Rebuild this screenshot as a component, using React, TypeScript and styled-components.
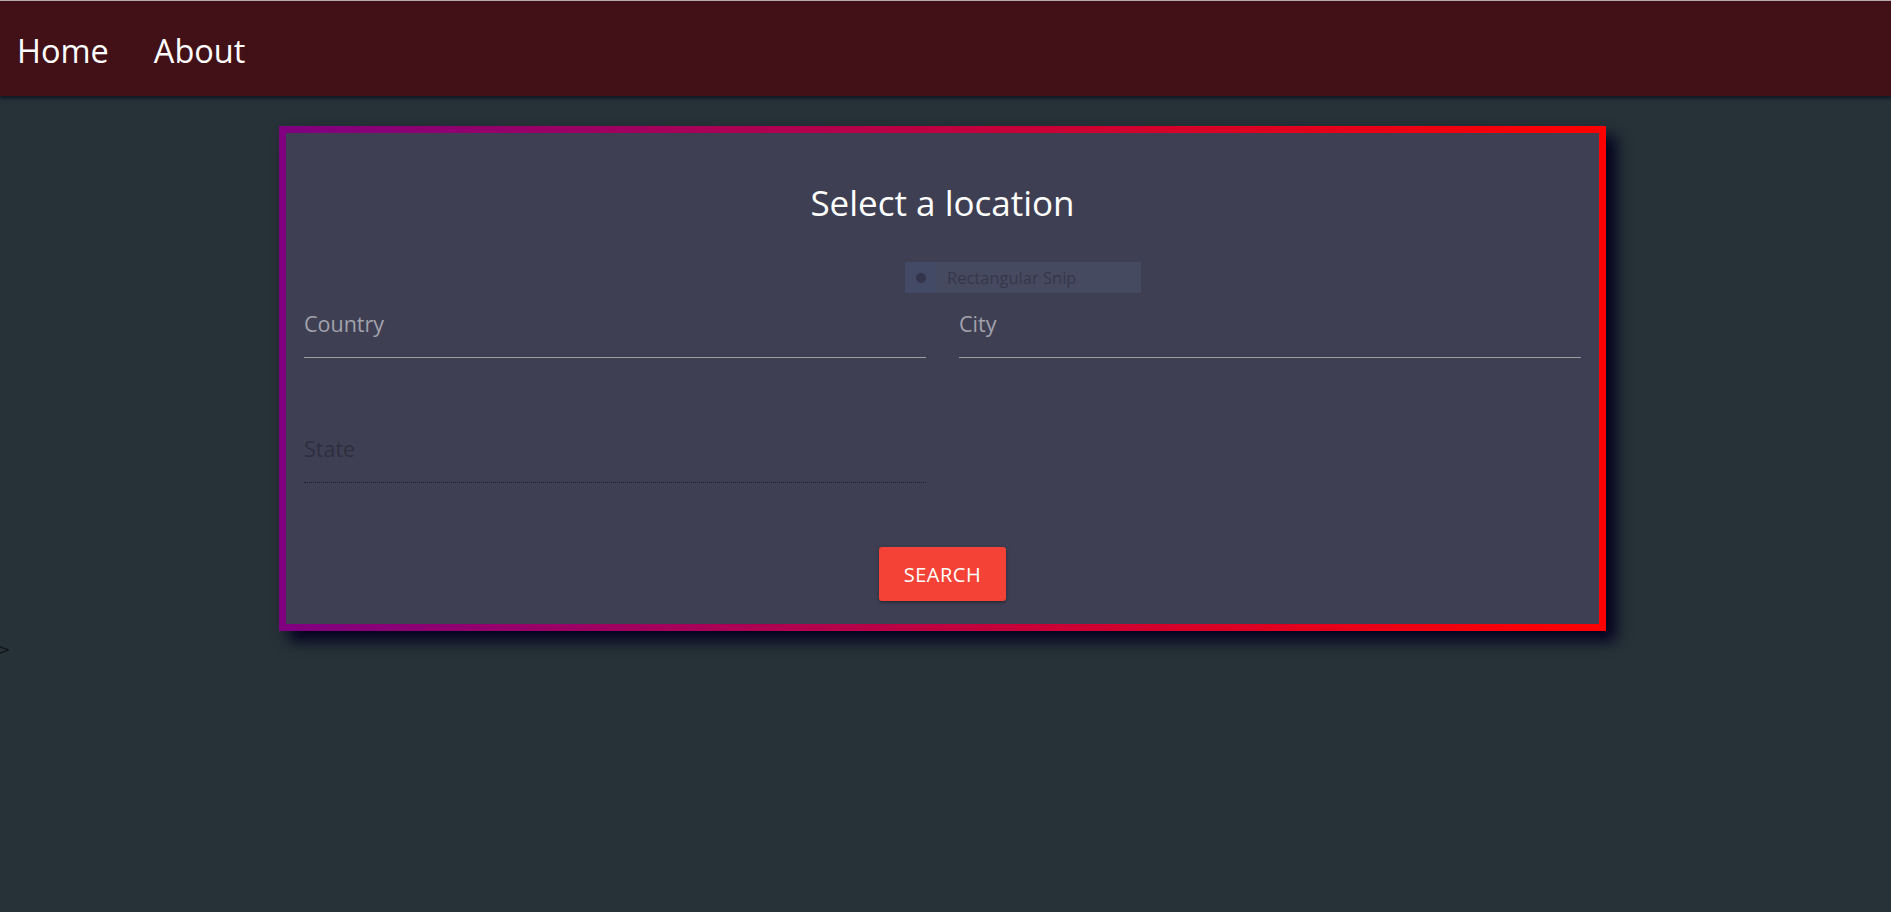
import React from "react";
import styled, { createGlobalStyle } from "styled-components";

const GlobalStyle = createGlobalStyle`
  html, body {
    margin: 0;
    padding: 0;
    background: #263238;
    font-family: "Open Sans", "Noto Sans", Arial, sans-serif;
  }
  * { box-sizing: border-box; }
  #root { position: relative; min-height: 100vh; }
`;

const Nav = styled.nav`
  height: 96px;
  background: #421117;
  border-top: 1px solid #b9a8aa;
  display: flex;
  align-items: center;
  padding: 5px 0 0 17px;
  gap: 45px;
  box-shadow: 0 2px 3px rgba(5, 8, 30, 0.6), 0 1px 6px rgba(5, 8, 30, 0.3);
  position: relative;
  z-index: 1;
`;

const NavLink = styled.a`
  color: #ffffff;
  font-size: 32.5px;
  line-height: 1;
  text-decoration: none;
  cursor: pointer;
`;

const Main = styled.main`
  padding: 30px 0 0 279px;
`;

const Card = styled.section`
  position: relative;
  width: 1327px;
  height: 505px;
  border: 7px solid;
  border-image: linear-gradient(to right, #800080, #ff0000) 1;
  background: #3f3f54;
  box-shadow: 10px 10px 14px #03011f;
  padding: 49px 18px 20px;
  display: flex;
  flex-direction: column;
  align-items: center;
`;

const Title = styled.h4`
  margin: 0;
  color: #ffffff;
  font-size: 35px;
  font-weight: 400;
  line-height: 42px;
`;

const Snip = styled.div`
  position: absolute;
  left: 619px;
  top: 129px;
  width: 236px;
  height: 31px;
  background: #464a60;
  display: flex;
  align-items: center;
`;

const SnipIcon = styled.div`
  width: 31px;
  height: 31px;
  background: #434a66;
  display: flex;
  align-items: center;
  justify-content: center;
`;

const SnipDot = styled.span`
  width: 10px;
  height: 10px;
  border-radius: 50%;
  background: #34344b;
`;

const SnipText = styled.span`
  margin-left: 11px;
  color: #36364b;
  font-size: 16.5px;
`;

const FieldGrid = styled.div`
  width: 100%;
  margin-top: 85px;
  display: grid;
  grid-template-columns: 1fr 1fr;
  column-gap: 33px;
  row-gap: 76px;
`;

const Field = styled.label<{ $disabled?: boolean }>`
  display: block;
  padding-bottom: 18px;
  border-bottom: 1px ${(p) => (p.$disabled ? "dotted rgba(0,0,0,0.5)" : "solid #9e9e9e")};
`;

const FieldLabel = styled.span<{ $disabled?: boolean }>`
  display: block;
  font-size: 21.5px;
  line-height: 30px;
  color: ${(p) => (p.$disabled ? "#2e2e3e" : "#a2a2ab")};
`;

const Button = styled.button`
  margin-top: 64px;
  height: 54px;
  padding: 0 25px;
  border: none;
  border-radius: 3px;
  background: #f44336;
  color: #ffffff;
  font-family: "Open Sans", "Noto Sans", Arial, sans-serif;
  font-size: 20px;
  letter-spacing: 0.5px;
  text-transform: uppercase;
  cursor: pointer;
  box-shadow: 0 2px 2px rgba(0, 0, 0, 0.14), 0 3px 1px -2px rgba(0, 0, 0, 0.12),
    0 1px 5px rgba(0, 0, 0, 0.2);
`;

const Stray = styled.span`
  position: absolute;
  left: -3px;
  top: 640px;
  color: #11161c;
  font-size: 16px;
  font-family: "DejaVu Sans", sans-serif;
`;

export default function App() {
  return (
    <>
      <GlobalStyle />
      <Nav>
        <NavLink>Home</NavLink>
        <NavLink>About</NavLink>
      </Nav>
      <Main>
        <Card>
          <Title>Select a location</Title>
          <Snip>
            <SnipIcon>
              <SnipDot />
            </SnipIcon>
            <SnipText>Rectangular Snip</SnipText>
          </Snip>
          <FieldGrid>
            <Field>
              <FieldLabel>Country</FieldLabel>
            </Field>
            <Field>
              <FieldLabel>City</FieldLabel>
            </Field>
            <Field $disabled>
              <FieldLabel $disabled>State</FieldLabel>
            </Field>
          </FieldGrid>
          <Button>Search</Button>
        </Card>
      </Main>
      <Stray>&gt;</Stray>
    </>
  );
}
